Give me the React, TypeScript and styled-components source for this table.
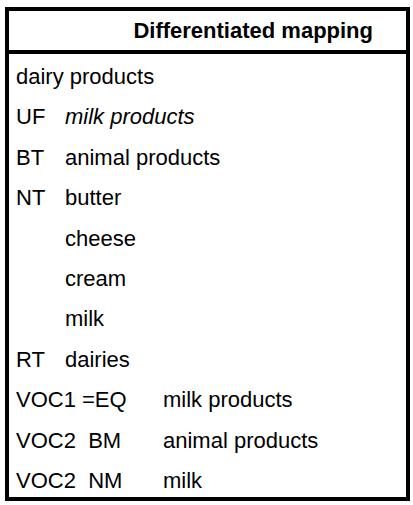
import styled, { createGlobalStyle } from "styled-components";

const GlobalStyle = createGlobalStyle`
  body {
    margin: 0;
    background: #ffffff;
    font-family: "Liberation Sans", Arial, sans-serif;
    color: #000000;
  }
`;

const Page = styled.div`
  padding: 7px 0 0 5px;
`;

const Table = styled.div`
  box-sizing: border-box;
  width: 405px;
  border: 4px solid #000;
  display: flex;
  flex-direction: column;
`;

const Header = styled.div`
  height: 39px;
  border-bottom: 4px solid #000;
  display: flex;
  align-items: center;
  justify-content: flex-end;
  padding-right: 33px;
  font-size: 22px;
  font-weight: bold;
`;

const Body = styled.div`
  padding: 3px 0 0 7px;
  display: flex;
  flex-direction: column;
`;

const Row = styled.div<{ $labelWidth: number }>`
  height: 40.4px;
  line-height: 40.4px;
  display: grid;
  grid-template-columns: ${(p) => p.$labelWidth}px 1fr;
  align-items: start;
  font-size: 22px;
  white-space: pre;

  &:last-child {
    height: 36px;
  }
`;

const Label = styled.span``;

const Value = styled.span<{ $italic?: boolean }>`
  font-style: ${(p) => (p.$italic ? "italic" : "normal")};
`;

const rows: { label: string; value: string; italic?: boolean; wide?: boolean }[] = [
  { label: "dairy products", value: "" },
  { label: "UF", value: "milk products", italic: true },
  { label: "BT", value: "animal products" },
  { label: "NT", value: "butter" },
  { label: "", value: "cheese" },
  { label: "", value: "cream" },
  { label: "", value: "milk" },
  { label: "RT", value: "dairies" },
  { label: "VOC1 =EQ", value: "milk products", wide: true },
  { label: "VOC2  BM", value: "animal products", wide: true },
  { label: "VOC2  NM", value: "milk", wide: true },
];

export default function App() {
  return (
    <>
      <GlobalStyle />
      <Page>
        <Table>
          <Header>Differentiated mapping</Header>
          <Body>
            {rows.map((r, i) =>
              r.value === "" ? (
                <Row key={i} $labelWidth={400}>
                  <Label>{r.label}</Label>
                </Row>
              ) : (
                <Row key={i} $labelWidth={r.wide ? 147 : 49}>
                  <Label>{r.label}</Label>
                  <Value $italic={r.italic}>{r.value}</Value>
                </Row>
              )
            )}
          </Body>
        </Table>
      </Page>
    </>
  );
}
